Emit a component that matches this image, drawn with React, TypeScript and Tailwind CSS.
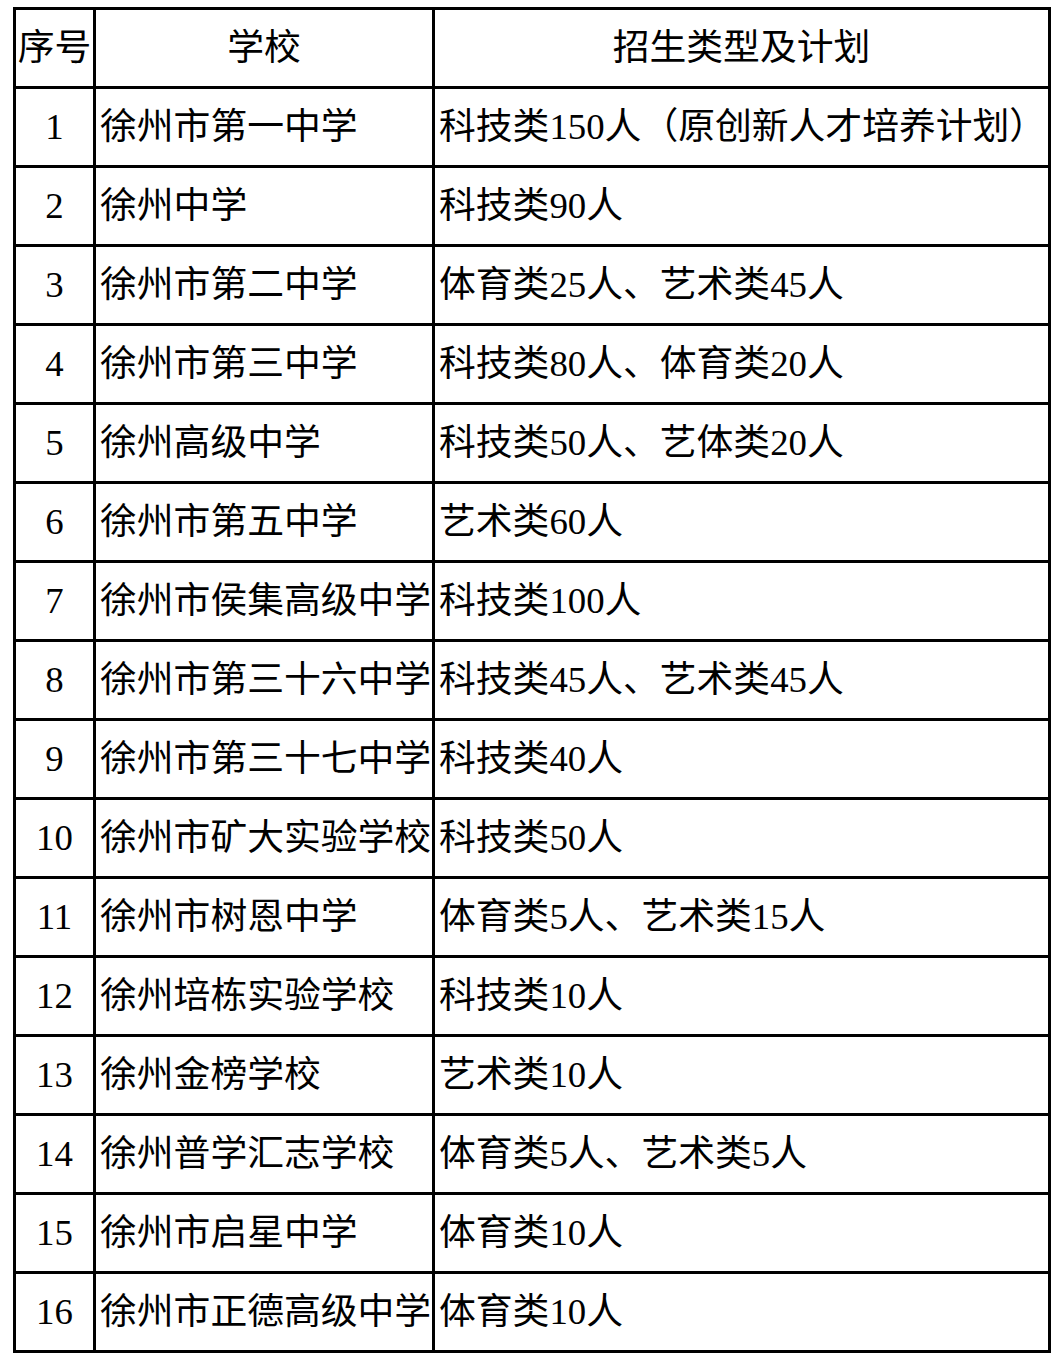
import React from "react";

const rows: [string, string, string][] = [
  ["1", "徐州市第一中学", "科技类150人（原创新人才培养计划）"],
  ["2", "徐州中学", "科技类90人"],
  ["3", "徐州市第二中学", "体育类25人、艺术类45人"],
  ["4", "徐州市第三中学", "科技类80人、体育类20人"],
  ["5", "徐州高级中学", "科技类50人、艺体类20人"],
  ["6", "徐州市第五中学", "艺术类60人"],
  ["7", "徐州市侯集高级中学", "科技类100人"],
  ["8", "徐州市第三十六中学", "科技类45人、艺术类45人"],
  ["9", "徐州市第三十七中学", "科技类40人"],
  ["10", "徐州市矿大实验学校", "科技类50人"],
  ["11", "徐州市树恩中学", "体育类5人、艺术类15人"],
  ["12", "徐州培栋实验学校", "科技类10人"],
  ["13", "徐州金榜学校", "艺术类10人"],
  ["14", "徐州普学汇志学校", "体育类5人、艺术类5人"],
  ["15", "徐州市启星中学", "体育类10人"],
  ["16", "徐州市正德高级中学", "体育类10人"],
];

const cell =
  "h-[79px] border-r-[3px] border-b-[3px] border-black flex items-center whitespace-nowrap overflow-visible";

export default function App() {
  return (
    <div
      className="bg-white w-[1064px] h-[1357px] pt-[7px] pl-[13px] text-black text-[36.8px] leading-none"
      style={{ fontFamily: '"Liberation Serif", "Noto Sans CJK SC", serif' }}
    >
      <div className="grid grid-cols-[80px_339px_616px] w-[1038px] border-l-[3px] border-t-[3px] border-black">
        <div className={`${cell} justify-center`}>序号</div>
        <div className={`${cell} justify-center`}>学校</div>
        <div className={`${cell} justify-center`}>招生类型及计划</div>
        {rows.map(([n, s, p]) => (
          <React.Fragment key={n}>
            <div className={`${cell} justify-center`}>{n}</div>
            <div className={`${cell} pl-[4px]`}>{s}</div>
            <div className={`${cell} pl-[4px]`}>{p}</div>
          </React.Fragment>
        ))}
      </div>
    </div>
  );
}
